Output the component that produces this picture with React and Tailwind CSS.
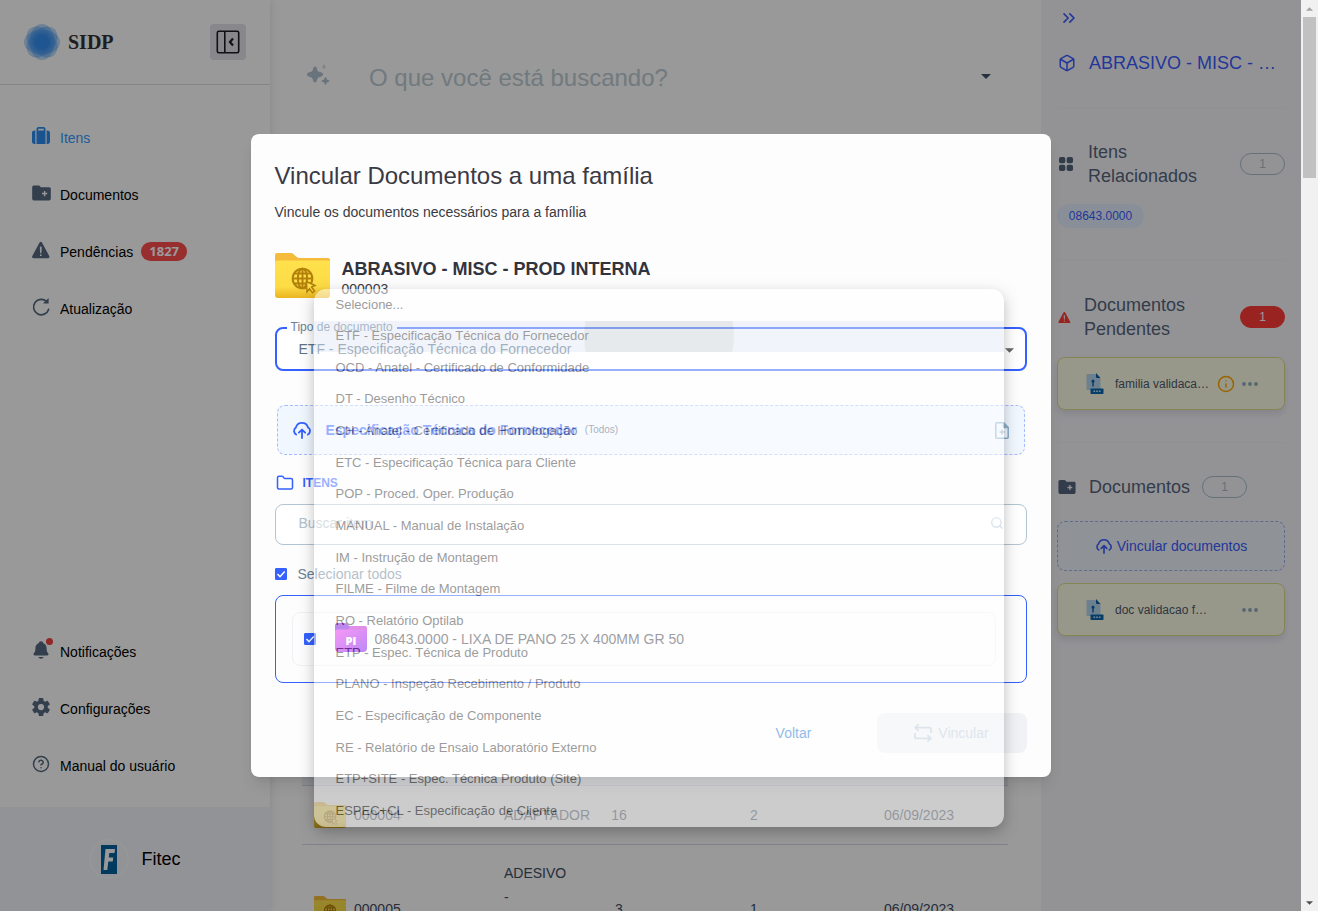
import React from "react";
import { FaSuitcase } from "react-icons/fa6";
import { IoWarning, IoNotifications, IoSettingsSharp } from "react-icons/io5";
import { Box, ChevronsRight, CircleQuestionMark, Folder, Info, Search } from "lucide-react";

const documentTypes = [
  "Selecione...",
  "ETF - Especificação Técnica do Fornecedor",
  "OCD - Anatel - Certificado de Conformidade",
  "DT - Desenho Técnico",
  "CH - Anatel - Certificado de Homologação",
  "ETC - Especificação Técnica para Cliente",
  "POP - Proced. Oper. Produção",
  "MANUAL - Manual de Instalação",
  "IM - Instrução de Montagem",
  "FILME - Filme de Montagem",
  "RO - Relatório Optilab",
  "ETP - Espec. Técnica de Produto",
  "PLANO - Inspeção Recebimento / Produto",
  "EC - Especificação de Componente",
  "RE - Relatório de Ensaio Laboratório Externo",
  "ETP+SITE - Espec. Técnica Produto (Site)",
  "ESPEC+CL - Especificação de Cliente",
];

const petals = [0, 45, 90, 135];

function LogoIcon() {
  return (
    <svg viewBox="0 0 36 36" className="size-9" aria-hidden="true">
      {petals.map((a) => (
        <ellipse key={a} cx="18" cy="18" rx="18" ry="12.500" fill="#2b8df0" opacity="0.33" transform={`rotate(${a} 18 18)`} />
      ))}
      {petals.map((a) => (
        <ellipse key={a} cx="18" cy="18" rx="11" ry="7" fill="#1a7df0" opacity="0.16" transform={`rotate(${a} 18 18)`} />
      ))}
    </svg>
  );
}

function CollapseIcon() {
  return (
    <svg viewBox="0 0 24 24" className="size-6" fill="none" stroke="#1d1d22" strokeWidth="1.600" aria-hidden="true">
      <rect x="1.300" y="1.300" width="21.400" height="21.400" rx="1.500" />
      <path d="M8.800 1.300v21.400" />
      <path d="M17 8.600 14 12l3 3.400" strokeWidth="2.200" />
    </svg>
  );
}

function FolderPlusIcon({ className }) {
  return (
    <svg viewBox="0 0 20 16" className={className} fill="currentColor" aria-hidden="true">
      <path
        fillRule="evenodd"
        d="M2 0h5.600l1.800 2H18.200A1.600 1.600 0 0 1 19.800 3.600V14a1.900 1.900 0 0 1-1.900 1.900H2.100A1.900 1.900 0 0 1 .2 14V1.800A1.800 1.800 0 0 1 2 0Zm10.500 5.800v2H10.500v1.500h2v2h1.500v-2h2V7.800h-2v-2Z"
      />
    </svg>
  );
}

function CloudUploadIcon({ className }) {
  return (
    <svg viewBox="0 0 22 20" className={className} fill="none" stroke="currentColor" strokeWidth="2" strokeLinecap="round" strokeLinejoin="round" aria-hidden="true">
      <path d="M4.500 15A4.500 4.500 0 0 1 4.200 7.300 7 7 0 0 1 17.700 7.300 4.300 4.300 0 0 1 17.500 15" />
      <path d="M11 19V10M7.500 13 11 9.500 14.500 13" />
    </svg>
  );
}

function ReloadIcon() {
  return (
    <svg viewBox="0 0 20 20" className="size-5" fill="none" stroke="currentColor" strokeWidth="1.700" aria-hidden="true">
      <path d="M17.600 12.400A7.700 7.700 0 1 1 15.700 4.600" strokeLinecap="round" />
      <path d="M17.600 1v5.600h-5.600Z" fill="currentColor" stroke="none" />
    </svg>
  );
}

function SparkleIcon() {
  return (
    <svg viewBox="0 0 24 24" className="mb-1 size-6" aria-hidden="true">
      <path fill="#b0c0cf" d="M9 2.500c1.100 0 1.500.8 1.800 2 .6 2.600 1.200 3.200 3.800 3.800 1.400.4 2.400.9 2.400 2.200s-1 1.800-2.400 2.200c-2.600.6-3.200 1.200-3.800 3.800-.3 1.200-.7 2-1.800 2s-1.500-.8-1.800-2c-.6-2.600-1.200-3.200-3.800-3.800C2 12.300 1 11.800 1 10.500s1-1.800 2.400-2.200C6 7.700 6.600 7.100 7.200 4.500c.3-1.200.7-2 1.800-2Z" />
      <path fill="#b0c0cf" d="M19.500 13c.9 0 1 2 1.400 2.400s2.600.6 2.600 1.600-2.100 1.100-2.600 1.600-.5 2.400-1.400 2.400-1-2-1.400-2.400-2.600-.6-2.600-1.600 2.100-1.100 2.600-1.600.5-2.400 1.400-2.400Z" />
      <path fill="#dcdde4" d="m18 0 1.800 2.700L18 5.400l-1.800-2.700Z" />
    </svg>
  );
}

function GridIcon() {
  return (
    <svg viewBox="0 0 14 14" className="size-[14px]" fill="#52647a" aria-hidden="true">
      <rect width="6.300" height="6.300" rx="1.800" />
      <rect x="7.700" width="6.300" height="6.300" rx="1.800" />
      <rect y="7.700" width="6.300" height="6.300" rx="1.800" />
      <rect x="7.700" y="7.700" width="6.300" height="6.300" rx="1.800" />
    </svg>
  );
}

function FamilyFolderIcon({ className }) {
  return (
    <svg viewBox="0 0 55 45" className={className} preserveAspectRatio="none" aria-hidden="true">
      <defs>
        <linearGradient id="folderFront" x1="0" y1="0" x2="0" y2="1">
          <stop offset="0" stopColor="#ffe14d" />
          <stop offset="0.700" stopColor="#fddc45" />
          <stop offset="1" stopColor="#eab420" />
        </linearGradient>
      </defs>
      <path d="M0 2a2 2 0 0 1 2-2h14c3 0 5 5 8 5h29a2 2 0 0 1 2 2v12H0Z" fill="#f5bb3a" />
      <path d="M0 9a1.500 1.500 0 0 1 1.500-1.500h52A1.500 1.500 0 0 1 55 9v33a3 3 0 0 1-3 3H3a3 3 0 0 1-3-3Z" fill="url(#folderFront)" />
      <g fill="none" stroke="#b3810a" strokeWidth="2">
        <circle cx="27.500" cy="25.500" r="9.800" />
        <ellipse cx="27.500" cy="25.500" rx="4.600" ry="9.800" />
        <path d="M27.500 15.700v19.600M17.700 25.500h19.600M19 20.500h17M19 30.500h17" />
      </g>
      <path d="m31.500 28.500 8.500 4-3.500 1.500 3 4-2 1.700-3-4-2.500 3.200Z" fill="#ffe14d" stroke="#b3810a" strokeWidth="1.500" />
    </svg>
  );
}

function ItemFolderIcon() {
  return (
    <svg viewBox="0 0 32 29" className="mb-1 h-[29px] w-8" role="img" aria-label="PI">
      <defs>
        <linearGradient id="itemFront" x1="0" y1="0" x2="1" y2="1">
          <stop offset="0" stopColor="#ee30ee" />
          <stop offset="1" stopColor="#7c10ee" />
        </linearGradient>
      </defs>
      <path d="M0 2.500A2.500 2.500 0 0 1 2.500 0H10c2 0 3 3 5 3h14a3 3 0 0 1 3 3v10H0Z" fill="#7a10dc" />
      <path d="M15 3h14a3 3 0 0 1 3 3v3H12Z" fill="#c41cd4" />
      <path d="M0 9a2.500 2.500 0 0 1 2.500-2.500h27A2.500 2.500 0 0 1 32 9v16a4 4 0 0 1-4 4H4a4 4 0 0 1-4-4Z" fill="url(#itemFront)" />
      <text x="16" y="22" textAnchor="middle" fontFamily="Open Sans, sans-serif" fontWeight="800" fontSize="11" fill="#fff">PI</text>
    </svg>
  );
}

function FileIcon() {
  return (
    <svg viewBox="0 0 18 21" className="h-[21px] w-[18px] shrink-0" aria-hidden="true">
      <path d="M1.500 1H10l4.500 4.500V17h-13A1 1 0 0 1 .5 16V2a1 1 0 0 1 1-1Z" fill="#b5d6ee" />
      <path d="M10 0l4.500 5H11a1 1 0 0 1-1-1Z" fill="#0a5fa8" />
      <path d="M7 6.500a1.800 1.800 0 0 1 .7 3.300V13.500H6.300V9.800A1.800 1.800 0 0 1 7 6.500Z" fill="#0a5fa8" />
      <rect x="4.500" y="15.500" width="13" height="5.500" rx="0.800" fill="#0a66b0" />
      <path d="M7.500 18.300h1.600M10.200 18.300h1.600M12.900 18.300h1.600" stroke="#d7eaf8" strokeWidth="1.600" />
    </svg>
  );
}

function FilePlusIcon() {
  return (
    <svg viewBox="0 0 14 17" className="h-[17px] w-[14px]" fill="none" stroke="#8fb0cc" strokeWidth="1.500" strokeLinejoin="round" aria-hidden="true">
      <path d="M.8 1.800a1 1 0 0 1 1-1H8.500l4.700 4.700v9.700a1 1 0 0 1-1 1H1.800a1 1 0 0 1-1-1Z" />
      <path d="M8.500.8v4.700h4.700Z" fill="#8fb0cc" />
      <path d="M7 7.500v5M4.500 10h5" />
    </svg>
  );
}

function LinkIcon() {
  return (
    <svg viewBox="0 0 18 18" className="size-[18px]" fill="none" stroke="currentColor" strokeWidth="1.900" strokeLinecap="round" strokeLinejoin="round" aria-hidden="true">
      <path d="M4 .9 1.200 3.600 4 6.300" />
      <path d="M1.400 3.600H15.500a1.500 1.500 0 0 1 1.500 1.500V8" />
      <path d="m14 11.700 2.800 2.700L14 17.100" />
      <path d="M16.600 14.400H2.500A1.500 1.500 0 0 1 1 12.900V10" />
    </svg>
  );
}

function FitecLogo() {
  return (
    <span className="flex size-10 items-center justify-center rounded-full border-2 border-[#f9fafc] bg-[#f4f6fa]">
      <svg viewBox="0 0 16 29" className="h-[29px] w-4" aria-hidden="true">
        <rect width="16" height="29" fill="#00639f" />
        <path d="M4.500 4H14l-.5 4H8.300l-.5 4.500h4.400l-.4 4H7.300L6.300 25H2.500Z" fill="#fff" />
      </svg>
    </span>
  );
}

function Dots() {
  return (
    <svg viewBox="0 0 16 4" className="h-1 w-4" fill="#8fa9bd" aria-hidden="true">
      <circle cx="2" cy="2" r="1.900" />
      <circle cx="8" cy="2" r="1.900" />
      <circle cx="14" cy="2" r="1.900" />
    </svg>
  );
}

function Caret({ className }) {
  return (
    <svg viewBox="0 0 10 5" className={className} fill="currentColor" aria-hidden="true">
      <path d="M0 0h10L5 5Z" />
    </svg>
  );
}

function NavItem({ icon, label, active, children }) {
  return (
    <a href="#" className={`flex h-[57px] items-center pl-[31px] text-sm ${active ? "text-[#3399ff]" : "text-black"}`}>
      <span className={`relative mr-[9px] mb-[3px] flex size-5 items-center justify-center ${active ? "text-[#2b8cf0]" : "text-[#556981]"}`}>{icon}</span>
      {label}
      {children}
    </a>
  );
}

function Sidebar() {
  return (
    <aside className="z-10 flex w-[270px] shrink-0 flex-col bg-white shadow-[0_0_10px_rgba(0,0,0,0.12)]">
      <header className="flex h-[85px] shrink-0 items-center border-b border-[#dcdcde] px-6">
        <LogoIcon />
        <span className="ml-2 flex-1 font-['Liberation_Serif',serif] text-[20px] font-bold text-[#333338]">SIDP</span>
        <button type="button" aria-label="Recolher menu" className="flex size-9 items-center justify-center rounded bg-[#e2e2ea]">
          <CollapseIcon />
        </button>
      </header>
      <nav className="mt-6 flex flex-1 flex-col">
        <NavItem active icon={<FaSuitcase className="size-[18px]" />} label="Itens" />
        <NavItem icon={<FolderPlusIcon className="h-4 w-[19px]" />} label="Documentos" />
        <NavItem icon={<IoWarning className="size-[22px] shrink-0" />} label="Pendências">
          <span className="ml-2 flex h-[19px] w-[46px] items-center justify-center rounded-full bg-[#ff4d4f] font-['Open_Sans',sans-serif] text-[13px] font-bold text-white">1827</span>
        </NavItem>
        <NavItem icon={<ReloadIcon />} label="Atualização" />
        <div className="mt-auto mb-[13px]">
          <NavItem
            icon={
              <>
                <IoNotifications className="size-5" />
                <span className="absolute -top-0.5 right-[-2px] size-[7px] rounded-full bg-[#f04444]" />
              </>
            }
            label="Notificações"
          />
          <NavItem icon={<IoSettingsSharp className="size-5" />} label="Configurações" />
          <NavItem icon={<CircleQuestionMark className="size-[18px]" />} label="Manual do usuário" />
        </div>
      </nav>
      <footer className="flex h-[104px] shrink-0 items-center justify-center gap-3 bg-[#f3f5fa] text-lg text-black">
        <FitecLogo />
        Fitec
      </footer>
    </aside>
  );
}

function FamilyRow({ code, name, items, docs, date, height }) {
  return (
    <tr className={`border-b border-[#d5dae8] ${height}`}>
      <td className="pl-3">
        <div className="flex items-center gap-2">
          <FamilyFolderIcon className="h-[26px] w-8" />
          {code}
        </div>
      </td>
      <td className="whitespace-pre-line leading-6">{name}</td>
      <td className="text-center">{items}</td>
      <td className="text-center">{docs}</td>
      <td className="pr-[54px] text-right">{date}</td>
    </tr>
  );
}

function Content() {
  return (
    <main className="flex min-w-0 flex-1 flex-col overflow-hidden pr-[33px] pl-8">
      <div className="mt-14 flex h-11 shrink-0 items-center pr-[17px] pl-1">
        <SparkleIcon />
        <input
          type="text"
          aria-label="Busca"
          placeholder="O que você está buscando?"
          className="ml-[39px] h-11 min-w-0 flex-1 bg-transparent text-2xl placeholder:text-[#bccbd3] outline-none"
        />
        <button type="button" aria-label="Opções de busca" className="pb-1 text-[#40526b]">
          <Caret className="h-[5px] w-[10px]" />
        </button>
      </div>
      <div className="mt-[505px] shrink-0">
        <table className="w-full table-fixed text-sm text-[#3f4d63]">
          <colgroup>
            <col className="w-[202px]" />
            <col className="w-[90px]" />
            <col className="w-[50px]" />
            <col className="w-[220px]" />
            <col />
          </colgroup>
          <tbody>
            <tr className="h-[180px] border-b border-[#d5dae8] bg-[#f1f4f9]">
              <td colSpan={5} />
            </tr>
            <FamilyRow code="000004" name="ADAPTADOR" items="16" docs="2" date="06/09/2023" height="h-[59px]" />
            <FamilyRow code="000005" name={"ADESIVO\n-\n\u00a0\n\u00a0"} items="3" docs="1" date="06/09/2023" height="h-[130px]" />
          </tbody>
        </table>
      </div>
    </main>
  );
}

function CountPill({ filled }) {
  return (
    <span
      className={`flex h-[22px] w-[45px] shrink-0 items-center justify-center rounded-full border text-xs ${
        filled ? "border-[#ff3b36] bg-[#ff3b36] text-white" : "border-[#a9bcc9] text-[#a9bcc9]"
      }`}
    >
      1
    </span>
  );
}

function DocumentCard({ name, pending }) {
  return (
    <div className="flex h-[53px] items-center rounded-lg border border-[#dbe08c] bg-[#fefee6] pr-[26px] pl-7 text-xs text-[#4d5a6e] shadow-[0_4px_6px_rgba(40,40,90,0.12)]">
      <FileIcon />
      <span className={`ml-[11px] truncate ${pending ? "w-[95px]" : "w-[93px]"}`}>{name}</span>
      {pending && <Info className="ml-[7px] size-[18px] text-[#ffa800]" />}
      <button type="button" aria-label={`Ações de ${name}`} className="ml-auto">
        <Dots />
      </button>
    </div>
  );
}

function DetailsPanel() {
  return (
    <aside className="w-[260px] shrink-0 bg-[#f6f6fb] px-4 pt-2 text-[#56657c]">
      <button type="button" aria-label="Fechar painel" className="ml-0.5 flex size-5 items-center justify-center text-[#3a5cff]">
        <ChevronsRight className="size-5 shrink-0" />
      </button>
      <h2 className="mt-[23px] flex items-center gap-[13px] text-[#3a5cff]">
        <Box className="ml-px size-[18px] shrink-0" />
        <span className="truncate text-lg leading-6">ABRASIVO - MISC - PROD INTERNA</span>
      </h2>
      <section className="mt-8 border-t border-[#f0f0f4] pt-8">
        <div className="flex items-center">
          <span className="mx-0.5"><GridIcon /></span>
          <h3 className="ml-[13px] flex-1 text-lg leading-6">Itens<br />Relacionados</h3>
          <CountPill />
        </div>
        <span className="mt-4 flex h-6 w-[87px] items-center justify-center rounded-full bg-[#e3efff] text-xs text-[#3a5cff]">08643.0000</span>
      </section>
      <section className="mt-8 border-t border-[#f0f0f4] pt-8">
        <div className="flex items-center">
          <IoWarning className="size-[15px] shrink-0 text-[#ff3b36]" />
          <h3 className="ml-3 flex-1 text-lg leading-6">Documentos<br />Pendentes</h3>
          <CountPill filled />
        </div>
        <div className="mt-4">
          <DocumentCard name="familia validacao fornecedor" pending />
        </div>
      </section>
      <section className="mt-8 border-t border-[#f0f0f4] pt-8">
        <div className="flex items-center">
          <FolderPlusIcon className="ml-px h-[14px] w-[18px]" />
          <h3 className="ml-[13px] text-lg leading-6">Documentos</h3>
          <span className="ml-3"><CountPill /></span>
        </div>
        <button type="button" className="mt-[22px] flex h-[50px] w-full items-center justify-center gap-1 rounded-lg border border-dashed border-[#9db2ee] bg-[#eff4fb] text-sm text-[#3a5cff]">
          <CloudUploadIcon className="h-4 w-[18px]" />
          Vincular documentos
        </button>
        <div className="mt-3">
          <DocumentCard name="doc validacao fornecedor" />
        </div>
      </section>
    </aside>
  );
}

function Checkbox({ id, label }) {
  return (
    <span className="relative flex size-3">
      <input id={id} type="checkbox" defaultChecked aria-label={label} className="size-3 appearance-none rounded-[1px] border border-[#3461ff] checked:bg-[#3461ff]" />
      <svg viewBox="0 0 12 12" className="pointer-events-none absolute inset-0 size-3" fill="none" stroke="#fff" strokeWidth="1.500" aria-hidden="true">
        <path d="m2.500 6 2.500 2.700 4.700-5.200" />
      </svg>
    </span>
  );
}

function TypeMenu() {
  return (
    <ul
      role="listbox"
      aria-label="Tipos de documento"
      className="absolute top-[155px] right-[47px] left-[63px] flex h-[538px] flex-col overflow-hidden rounded-xl bg-white text-[13px] text-[#3c3c3c] opacity-50 shadow-[0_5px_14px_rgba(0,0,0,0.5)]"
    >
      {documentTypes.map((type, i) => (
        <li
          key={type}
          role="option"
          aria-selected={i === 1}
          className={`relative flex flex-1 items-center overflow-hidden pl-[22px] ${i === 1 ? "bg-[#e4ebf6]" : ""}`}
        >
          {i === 1 && <span className="absolute -top-[60px] left-[270px] size-[150px] rounded-full bg-[#ced7dc]" />}
          <span className="relative">{type}</span>
        </li>
      ))}
    </ul>
  );
}

function LinkDialog() {
  return (
    <div role="dialog" aria-labelledby="dialog-title" className="relative w-[800px] max-w-full rounded-lg bg-[#fdfdfd] p-6 text-sm text-[#3a3a44] shadow-lg">
      <h1 id="dialog-title" className="text-2xl leading-9">Vincular Documentos a uma família</h1>
      <p className="mt-2 leading-5">Vincule os documentos necessários para a família</p>

      <div className="mt-[31px] flex items-start gap-3">
        <FamilyFolderIcon className="h-[45px] w-[55px]" />
        <div className="pt-1.5 leading-5">
          <h2 className="text-lg leading-5 font-bold text-[#33333d]">ABRASIVO - MISC - PROD INTERNA</h2>
          <p>000003</p>
        </div>
      </div>

      <div className="relative mt-7">
        <label htmlFor="doc-type" className="absolute -top-2 left-3 bg-[#fdfdfd] px-1 text-xs leading-4 text-[#6b8297]">Tipo de documento</label>
        <select id="doc-type" defaultValue={documentTypes[1]} className="h-11 w-full appearance-none rounded-lg border-2 border-[#3461ff] bg-white pr-8 pl-[22px] text-sm text-[#5d7488] outline-none">
          {documentTypes.map((type) => (
            <option key={type}>{type}</option>
          ))}
        </select>
        <Caret className="pointer-events-none absolute top-[21px] right-[13px] h-[5px] w-[9px] text-[#666]" />
      </div>

      <button type="button" className="mx-0.5 mt-[34px] flex h-[50px] w-[calc(100%-4px)] items-center rounded-lg border border-dashed border-[#a7bcff] bg-[#f0f7ff] pr-[15px] pl-[14px] text-[#3461ff]">
        <CloudUploadIcon className="h-[18px] w-5" />
        <span className="ml-[14px] font-bold">Especificação Técnica do Fornecedor</span>
        <span className="ml-2 flex-1 text-left text-[10px] text-[#55607a]">(Todos)</span>
        <FilePlusIcon />
      </button>

      <h3 className="mt-[18px] flex items-center gap-[9px] pl-px text-xs leading-5 font-bold text-[#3461ff]">
        <Folder className="size-[18px]" />
        ITENS
      </h3>

      <div className="relative mt-[11px]">
        <input type="text" aria-label="Buscar item" placeholder="Buscar item" className="block h-[41px] w-full rounded-lg border border-[#b3c5d3] bg-white pb-1 pl-[23px] text-sm placeholder:text-[#b3c0ca] outline-none" />
        <Search className="absolute top-3 right-[23px] size-[14px] text-[#a9c0d3]" />
      </div>

      <div className="mt-[19px] flex h-5 items-center gap-[11px] text-[#6b8297]">
        <Checkbox id="select-all" />
        <label htmlFor="select-all">Selecionar todos</label>
      </div>

      <div className="mt-[11px] h-[88px] rounded-lg border border-[#3461ff] py-4 pr-[30px] pl-4">
        <div className="flex h-[54px] items-center rounded-lg border border-[#eff1f6] pl-[11px]">
          <Checkbox id="item-08643" />
          <label htmlFor="item-08643" className="ml-[19px] flex items-center gap-2">
            <ItemFolderIcon />
            08643.0000 - LIXA DE PANO 25 X 400MM GR 50
          </label>
        </div>
      </div>

      <div className="mt-[30px] flex justify-end gap-2">
        <button type="button" className="h-10 w-[150px] rounded-lg text-[#1976d2]">Voltar</button>
        <button type="button" disabled className="flex h-10 w-[150px] items-center justify-center gap-1.5 rounded-lg bg-[#f0f2f6] text-[#bccbd9]">
          <LinkIcon />
          Vincular
        </button>
      </div>

      <TypeMenu />
    </div>
  );
}

function ScrollBar() {
  return (
    <div className="flex w-[17px] shrink-0 flex-col items-center bg-[#f1f1f1]" aria-hidden="true">
      <span className="flex h-[17px] items-center text-[#a3a3a3]"><Caret className="h-1 w-[7px] rotate-180" /></span>
      <span className="h-[161px] w-[13px] bg-[#c1c1c1]" />
      <span className="mt-auto flex h-[17px] items-center text-[#505050]"><Caret className="h-1 w-[7px]" /></span>
    </div>
  );
}

export default function App() {
  return (
    <div className="flex h-screen overflow-hidden bg-white font-['Liberation_Sans',Arial,sans-serif]">
      <div className="relative flex min-w-0 flex-1 overflow-hidden">
        <Sidebar />
        <Content />
        <DetailsPanel />
        <div className="absolute inset-0 z-20 flex items-center justify-center bg-black/40">
          <LinkDialog />
        </div>
      </div>
      <ScrollBar />
    </div>
  );
}
